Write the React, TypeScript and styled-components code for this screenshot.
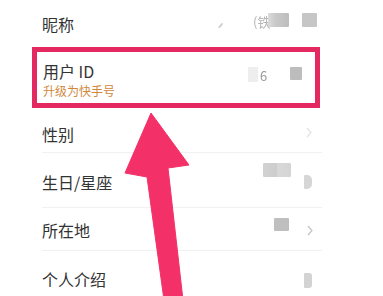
import React from "react";
import styled, { createGlobalStyle } from "styled-components";

const Global = createGlobalStyle`
  html, body { margin: 0; padding: 0; background: #fff; overflow: hidden; }
  body { font-family: "Noto Sans CJK SC", "Noto Sans", sans-serif; color: #333; }
`;

const Page = styled.div`
  position: relative;
  width: 383px;
  height: 296px;
  overflow: hidden;
  background: #fff;
`;

const List = styled.div`
  display: flex;
  flex-direction: column;
  padding-left: 32px;
  width: 290px;
`;

const Row = styled.div<{ $h: number; $pt?: number; $line?: boolean }>`
  box-sizing: border-box;
  margin-left: 10px;
  height: ${(p) => p.$h}px;
  padding-top: ${(p) => p.$pt ?? 0}px;
  display: flex;
  align-items: center;
  border-bottom: ${(p) => (p.$line ? "1px solid #f1f1f1" : "none")};
`;

const Label = styled.span`
  font-size: 16px;
  line-height: 22px;
  color: #333;
  white-space: nowrap;
`;

const Sub = styled.span`
  font-size: 12px;
  line-height: 18px;
  color: #d0873a;
  white-space: nowrap;
`;

const Highlight = styled.div`
  box-sizing: border-box;
  width: 288px;
  height: 61px;
  border: 5px solid #e3295f;
  display: flex;
  align-items: center;
  padding-left: 6px;
  padding-right: 13px;
`;

const Stack = styled.div`
  display: flex;
  flex-direction: column;
  align-self: flex-start;
  padding-top: 8px;
`;

const Right = styled.div<{ $pr: number }>`
  margin-left: auto;
  display: flex;
  align-items: center;
  padding-right: ${(p) => p.$pr}px;
`;

const Blob = styled.div<{ $w: number; $h: number; $c: string; $ml?: number; $dy?: number; $blur?: number; $r?: string }>`
  width: ${(p) => p.$w}px;
  height: ${(p) => p.$h}px;
  background: ${(p) => p.$c};
  margin-left: ${(p) => p.$ml ?? 0}px;
  transform: translateY(${(p) => p.$dy ?? 0}px);
  filter: blur(${(p) => p.$blur ?? 0.6}px);
  border-radius: ${(p) => p.$r ?? "1px"};
  flex: none;
`;

const Faint = styled.span<{ $w: number; $ml?: number; $dy?: number; $c: string }>`
  display: inline-block;
  width: ${(p) => p.$w}px;
  margin-left: ${(p) => p.$ml ?? 0}px;
  transform: translateY(${(p) => p.$dy ?? 0}px);
  font-size: 13px;
  line-height: 14px;
  color: ${(p) => p.$c};
  filter: blur(0.5px);
  white-space: nowrap;
  overflow: visible;
  flex: none;
`;

const Chev = styled.svg<{ $ml?: number; $dy?: number; $blur?: number }>`
  flex: none;
  margin-left: ${(p) => p.$ml ?? 0}px;
  transform: translateY(${(p) => p.$dy ?? 0}px);
  filter: blur(${(p) => p.$blur ?? 0.3}px);
`;

const Overlay = styled.svg`
  position: absolute;
  left: 0;
  top: 0;
  pointer-events: none;
`;

const Chevron = ({ color, ml, dy, blur }: { color: string; ml?: number; dy?: number; blur?: number }) => (
  <Chev width="6" height="11" viewBox="0 0 6 11" $ml={ml} $dy={dy} $blur={blur}>
    <polyline points="1,1 5,5.5 1,10" fill="none" stroke={color} strokeWidth="1.2" />
  </Chev>
);

export default function App() {
  return (
    <Page>
      <Global />
      <List>
        <Row $h={47}>
          <Label>昵称</Label>
          <Right $pr={5}>
            <Blob $w={2} $h={6} $c="#cfcfcf" $dy={2} $r="1px" style={{ rotate: "40deg" }} />
            <Faint $w={15} $ml={30} $dy={-2} $c="#b5b5b5">(铁</Faint>
            <Blob $w={21} $h={14} $c="linear-gradient(90deg,#dcdcdc 0%,#c9c9c9 35%,#bdbdbd 100%)" $dy={-4} />
            <Blob $w={15} $h={14} $c="#c6c6c6" $ml={13} $dy={-4} />
          </Right>
        </Row>
        <Highlight>
          <Stack>
            <Label>用户 ID</Label>
            <Sub>升级为快手号</Sub>
          </Stack>
          <Right $pr={0}>
            <Blob $w={10} $h={15} $c="#eeeeee" $dy={-3} />
            <Faint $w={8} $ml={2} $dy={-2} $c="#9a9a9a">6</Faint>
            <Blob $w={12} $h={13} $c="#bdbdbd" $ml={22} $dy={-4} />
          </Right>
        </Highlight>
        <Row $h={45} $pt={8} $line>
          <Label>性别</Label>
          <Right $pr={10}>
            <Chevron color="#e2e2e2" dy={-2} blur={0.5} />
          </Right>
        </Row>
        <Row $h={55} $pt={4} $line>
          <Label>生日/星座</Label>
          <Right $pr={10}>
            <Blob $w={28} $h={14} $c="linear-gradient(90deg,#d2d2d2 0%,#cdcdcd 48%,#d8d8d8 52%,#d4d4d4 100%)" $dy={-12} />
            <Blob $w={8} $h={14} $c="#d6d6d6" $ml={13} $dy={0} $r="1px 5px 5px 1px" />
          </Right>
        </Row>
        <Row $h={43} $pt={2} $line>
          <Label>所在地</Label>
          <Right $pr={9}>
            <Blob $w={15} $h={13} $c="#bfbfbf" $dy={-6} />
            <Chevron color="#c4c4c4" ml={18} dy={0} blur={0.4} />
          </Right>
        </Row>
        <Row $h={56}>
          <Label>个人介绍</Label>
          <Right $pr={10}>
            <Blob $w={8} $h={15} $c="#d3d3d3" $dy={1} $r="1px 3px 3px 1px" />
          </Right>
        </Row>
      </List>
      <Overlay width="383" height="296" viewBox="0 0 383 296">
        <polygon
          points="151,113 189,165 168,168 183,300 164,300 147,177 125,173"
          fill="#f33168"
          stroke="#f33168"
          strokeWidth="1"
          strokeLinejoin="round"
        />
      </Overlay>
    </Page>
  );
}
